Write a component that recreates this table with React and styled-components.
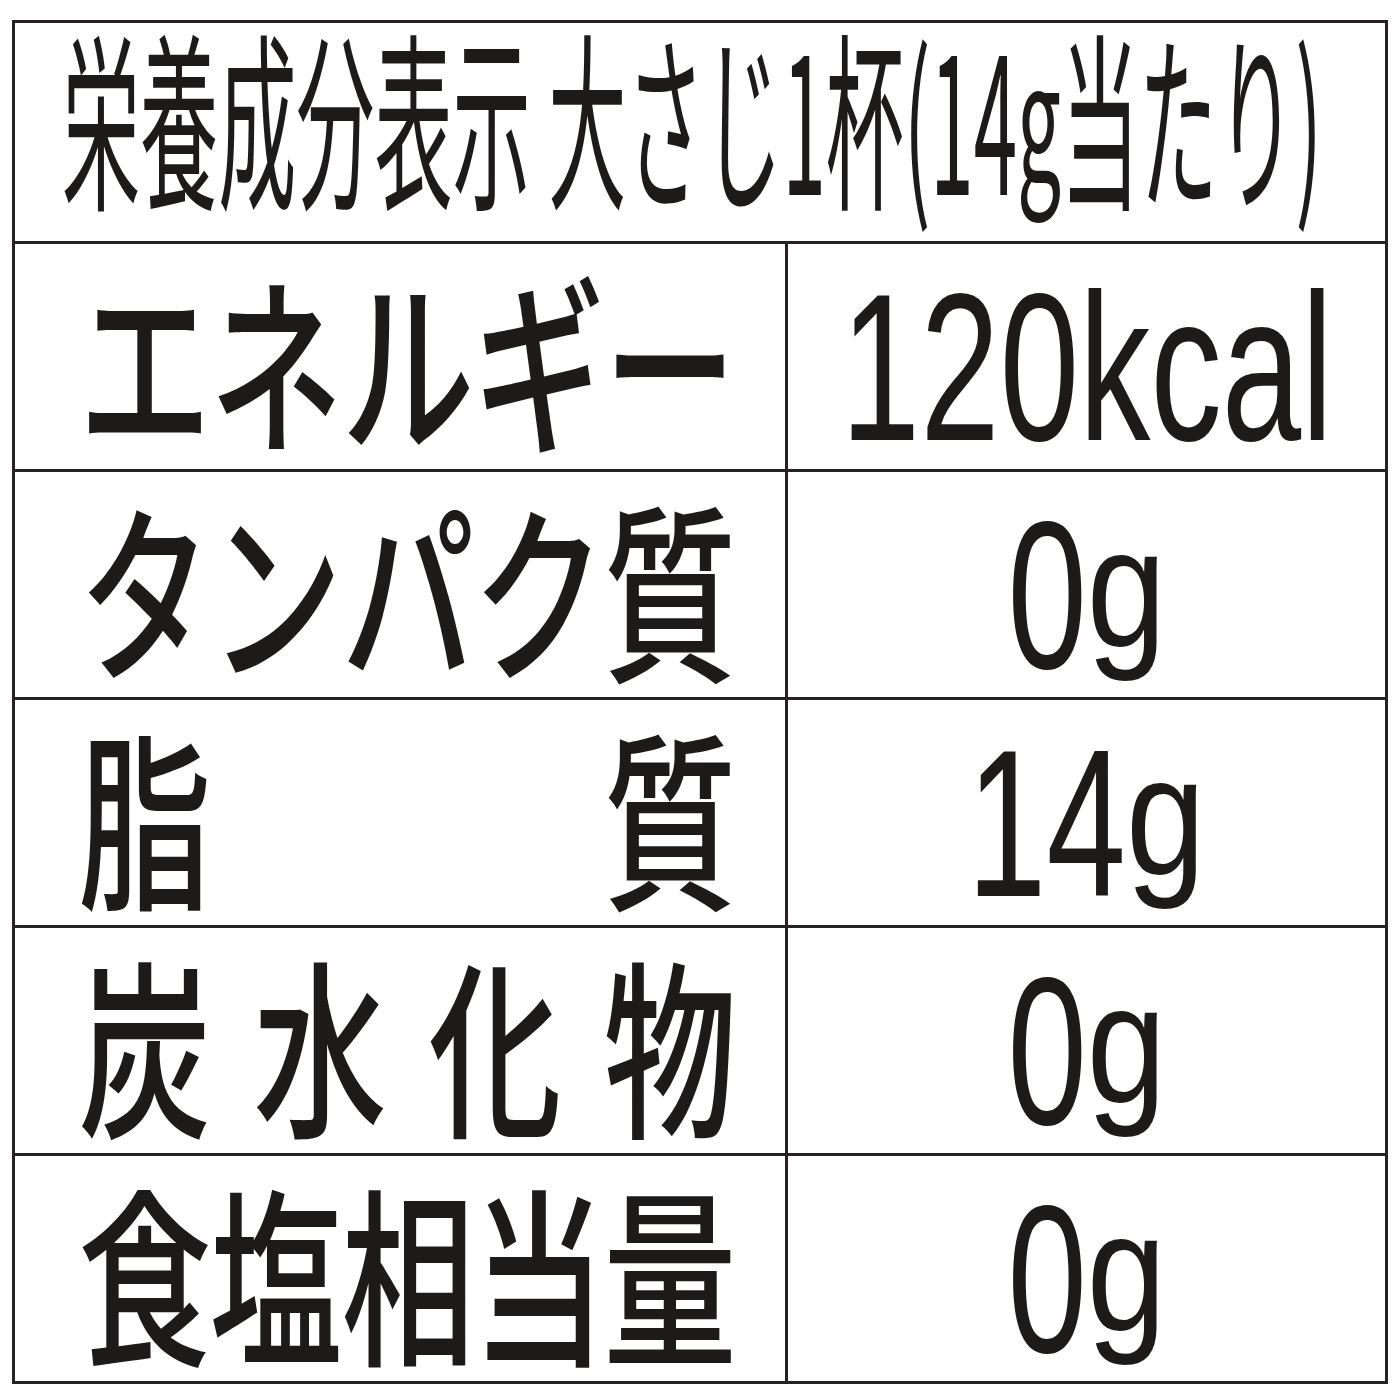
import React, { useLayoutEffect, useRef, useState } from "react";
import styled, { createGlobalStyle } from "styled-components";

const Global = createGlobalStyle`
  html, body { margin: 0; padding: 0; background: #ffffff; }
  body { width: 1400px; height: 1400px; overflow: hidden; }
`;

const LINE = "#262222";
const INK = "#1d1a1a";

const Table = styled.div`
  box-sizing: border-box;
  width: 1376px;
  margin: 20px 0 0 12px;
  border: 3px solid ${LINE};
  display: flex;
  flex-direction: column;
  color: ${INK};
`;

const Header = styled.div`
  box-sizing: border-box;
  height: 221px;
  border-bottom: 3px solid ${LINE};
  display: flex;
  align-items: center;
  padding: 0 0 38px 47px;
`;

const HeaderText = styled.span`
  display: inline-block;
  white-space: nowrap;
  font-family: "Noto Sans CJK JP", "Noto Sans", sans-serif;
  font-weight: 400;
  font-size: 190px;
  line-height: 1;
  transform-origin: left center;
`;

const HeaderGram = styled.span`
  display: inline-block;
  line-height: 1;
  transform: scaleY(0.86);
  transform-origin: 50% 86px;
`;

const Row = styled.div`
  box-sizing: border-box;
  height: 228px;
  display: grid;
  grid-template-columns: 773px minmax(0, 1fr);
  border-bottom: 3px solid ${LINE};
  &:last-child {
    height: 225px;
    border-bottom: none;
  }
`;

const NameCell = styled.div`
  box-sizing: border-box;
  border-right: 3px solid ${LINE};
  display: flex;
  align-items: center;
  padding-left: 65px;
  overflow: hidden;
`;

const Chars = styled.div`
  width: 655px;
  display: flex;
  justify-content: space-between;
`;

const CharBox = styled.span`
  width: 130px;
  display: flex;
  justify-content: center;
  overflow: visible;
`;

const Glyph = styled.span`
  display: inline-block;
  font-family: "Noto Sans CJK JP", sans-serif;
  font-weight: 500;
  font-size: 190px;
  line-height: 1;
  transform: scaleX(0.7);
  transform-origin: center;
`;

const ValueCell = styled.div`
  display: flex;
  align-items: center;
  justify-content: center;
  padding-top: 22px;
  overflow: hidden;
  min-width: 0;
`;

const Value = styled.span`
  flex: none;
  display: inline-block;
  font-family: "Liberation Sans", Arial, sans-serif;
  font-size: 210px;
  line-height: 1;
  transform: scaleX(0.68);
  transform-origin: center;
  white-space: nowrap;
`;

const Gram = styled.span`
  display: inline-block;
  line-height: 1;
  transform: scaleY(0.8);
  transform-origin: 50% 69px;
`;

function FitHeader({ target, children }) {
  const ref = useRef(null);
  const [scale, setScale] = useState(0.42);
  useLayoutEffect(() => {
    if (ref.current) {
      const w = ref.current.offsetWidth;
      if (w > 0) setScale(target / w);
    }
  }, [target]);
  return (
    <HeaderText ref={ref} style={{ transform: `scaleX(${scale})` }}>
      {children}
    </HeaderText>
  );
}

function Amount({ value }) {
  if (value.endsWith("g")) {
    return (
      <Value>
        {value.slice(0, -1)}
        <Gram>g</Gram>
      </Value>
    );
  }
  return <Value>{value}</Value>;
}

const rows = [
  { name: "エネルギー", value: "120kcal" },
  { name: "タンパク質", value: "0g" },
  { name: "脂質", value: "14g" },
  { name: "炭水化物", value: "0g" },
  { name: "食塩相当量", value: "0g" },
];

export default function App() {
  return (
    <>
      <Global />
      <Table>
        <Header>
          <FitHeader target={1260}>
            栄養成分表示 大さじ1杯(14<HeaderGram>g</HeaderGram>当たり)
          </FitHeader>
        </Header>
        {rows.map((r) => (
          <Row key={r.name}>
            <NameCell>
              <Chars>
                {Array.from(r.name).map((c, i) => (
                  <CharBox key={i}>
                    <Glyph>{c}</Glyph>
                  </CharBox>
                ))}
              </Chars>
            </NameCell>
            <ValueCell>
              <Amount value={r.value} />
            </ValueCell>
          </Row>
        ))}
      </Table>
    </>
  );
}
